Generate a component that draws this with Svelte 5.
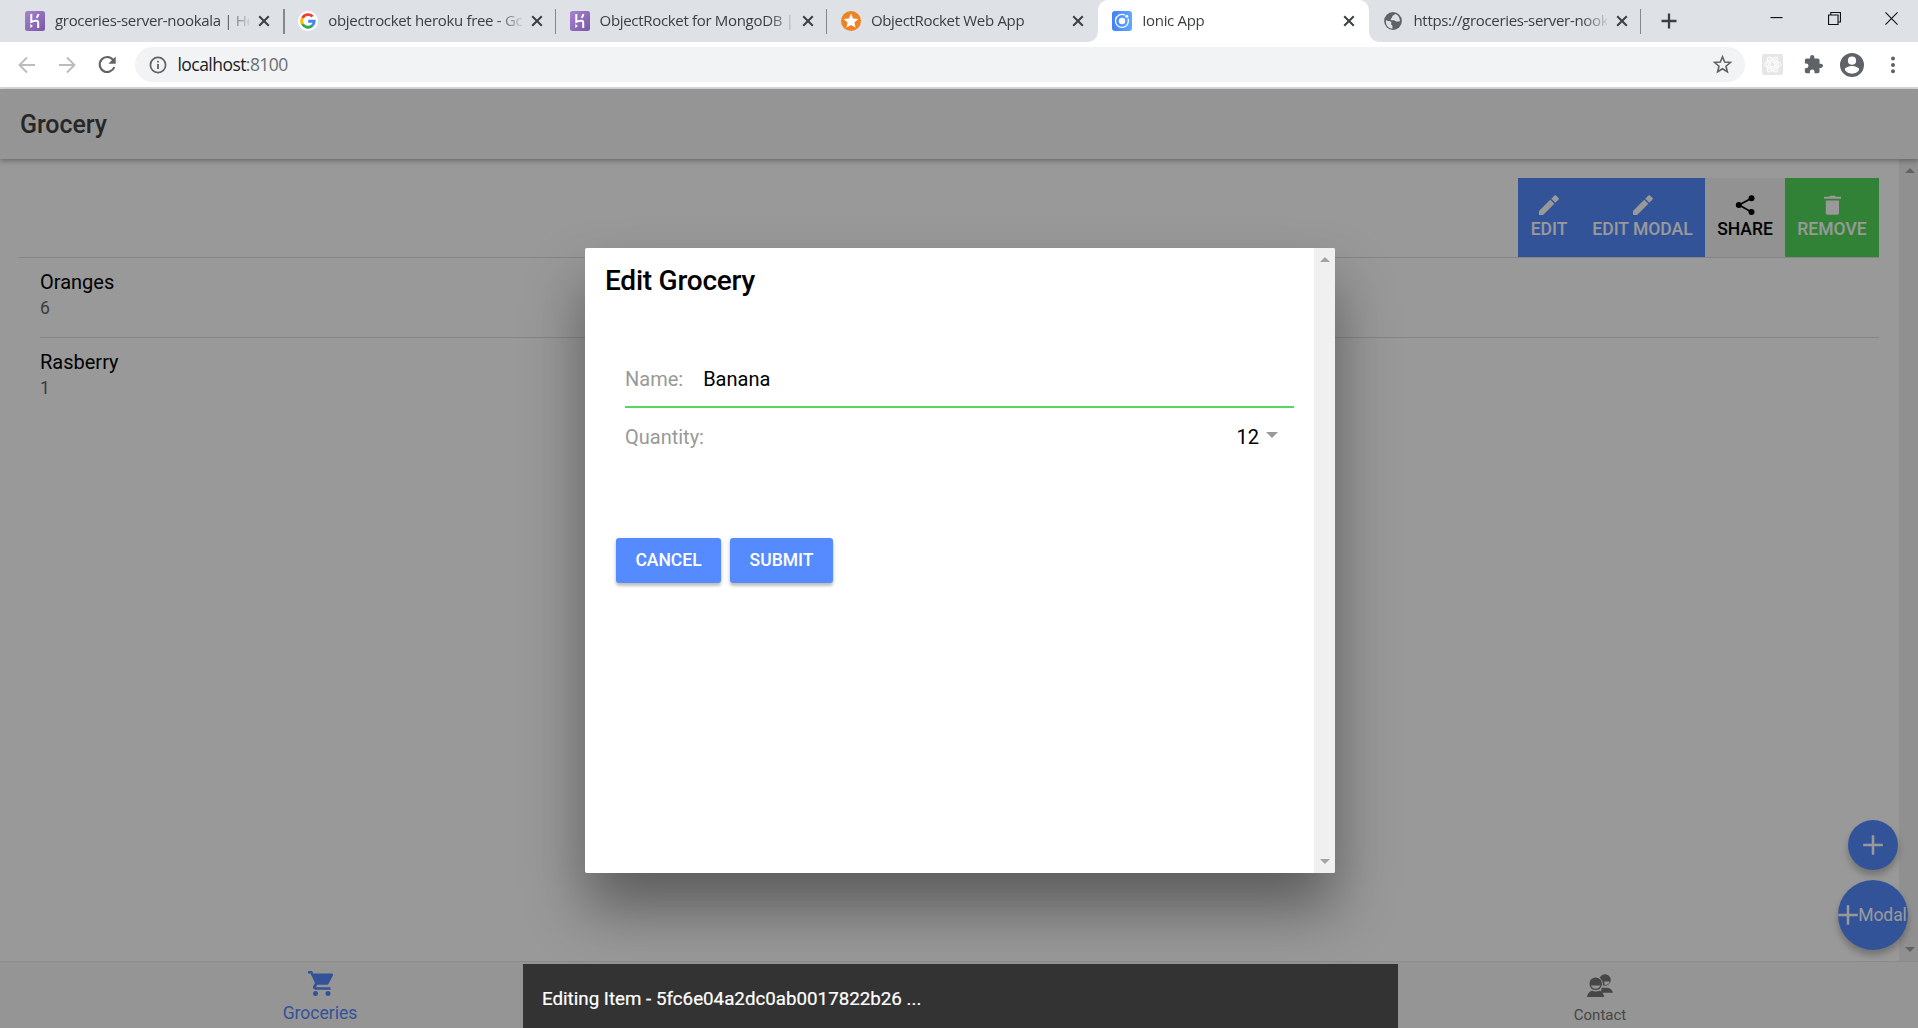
<script>
  const tabs = [
    { title: 'groceries-server-nookala | He', icon: 'heroku' },
    { title: 'objectrocket heroku free - Go', icon: 'google' },
    { title: 'ObjectRocket for MongoDB |', icon: 'heroku' },
    { title: 'ObjectRocket Web App', icon: 'star' },
    { title: 'Ionic App', icon: 'ionic', active: true },
    { title: 'https://groceries-server-nook', icon: 'globe' }
  ];
  const items = [
    { name: 'Oranges', qty: 6 },
    { name: 'Rasberry', qty: 1 }
  ];
</script>

{#snippet favicon(kind)}
  <svg class="favicon" viewBox="0 0 20 20">
    {#if kind === 'heroku'}
      <defs><linearGradient id="hk" x1="0" y1="0" x2="1" y2="1"><stop offset="0" stop-color="#a583cf" /><stop offset="1" stop-color="#7b58a6" /></linearGradient></defs>
      <rect width="20" height="20" rx="2.5" fill="url(#hk)" />
      <path d="M6.3 3v7.9c2.2-1 6.9-2.5 6.9.6V17M13.4 3c-.1 1.500-.8 2.700-1.800 3.800" fill="none" stroke="#fff" stroke-width="2" />
      <path d="M5.300 13l2.600 2-2.600 2z" fill="#fff" />
    {:else if kind === 'google'}
      <circle cx="10" cy="10" r="10" fill="#fff" />
      <g fill="none" stroke-width="2.900">
        <path d="M14.600 5.500A6.300 6.300 0 0 0 4.500 7" stroke="#ea4335" />
        <path d="M4.500 7a6.300 6.300 0 0 0 0 6.200" stroke="#fbbc05" />
        <path d="M4.500 13.100a6.300 6.300 0 0 0 9.700 1.600" stroke="#34a853" />
        <path d="M14.200 14.800a6.300 6.300 0 0 0 2-4.600H10.200" stroke="#4285f4" />
      </g>
    {:else if kind === 'star'}
      <circle cx="10" cy="10" r="10" fill="#f08223" />
      <path d="M10 2.600l2.100 4.900 5.300.4-4 3.500 1.200 5.200L10 13.900l-4.600 2.700 1.200-5.200-4-3.500 5.300-.4z" fill="#fff" />
    {:else if kind === 'ionic'}
      <defs><linearGradient id="io"><stop offset="0" stop-color="#4680fd" /><stop offset="1" stop-color="#60a8fb" /></linearGradient></defs>
      <rect width="20" height="20" rx="3" fill="url(#io)" />
      <path d="M12.800 4.100a6.500 6.500 0 1 0 3.200 3.400" fill="none" stroke="#fff" stroke-width="1.300" />
      <circle cx="10" cy="10" r="3.200" fill="#fff" /><circle cx="14.700" cy="5.200" r="1.500" fill="#fff" />
    {:else}
      <circle cx="10" cy="10" r="8.900" fill="#5f6368" />
      <path d="M3 9c1.500 1.500 3 .5 4.500 1.500 2 1.500-.5 2.500 1.200 3.500 1.300.8.300 2.500 1 3.600C5.500 17.600 2.200 14 3 9zM12 3c-1 1.800-3 1-2.800 3 .1 1.500-1.700 1-1.500 2.500.3 1.500 3 .2 4.300 1.200 1.500 1.200 2.800.8 4.900.6C17 6.500 15 3.700 12 3z" fill="#dee1e6" />
    {/if}
  </svg>
{/snippet}

{#snippet pencil()}
  <svg class="act-icon" viewBox="0 0 20 20" fill="#fff"><path d="M0 15.900V20h4.100L15.300 8.800l-4.100-4.100zM19.600 4.500a1.100 1.100 0 0 0 0-1.500L17 .4a1.100 1.100 0 0 0-1.500 0l-3.300 3.300 4.100 4.100z" /></svg>
{/snippet}

{#snippet plus()}
  <svg class="plus" viewBox="0 0 20 20"><path d="M10 .2v19.600M.2 10h19.600" stroke="#fff" stroke-width="2.500" fill="none" /></svg>
{/snippet}

<div class="window">
  <div class="tabstrip">
    {#each tabs as tab}
      <div class="tab" class:active={tab.active}>
        {@render favicon(tab.icon)}
        <span class="tab-title">{tab.title}</span>
        <svg class="close" viewBox="0 0 12 12"><path d="M1.200 1.200l9.600 9.600M10.800 1.200L1.200 10.800" stroke="#3c4043" stroke-width="2" /></svg>
      </div>
    {/each}
    <svg class="newtab" viewBox="0 0 16 16"><path d="M8 .5v15M.5 8h15" stroke="#3c4043" stroke-width="2.300" /></svg>
    <div class="controls">
      <svg viewBox="0 0 14 14"><path d="M.5 6h13" /></svg>
      <svg viewBox="0 0 14 14"><path d="M.6 3.300h10.200v10.200H.6zM3 3.300V.6h10.400v10.200h-2.500" /></svg>
      <svg viewBox="0 0 14 14"><path d="M.5.500l13 13M13.500.500l-13 13" /></svg>
    </div>
  </div>

  <div class="toolbar">
    <svg class="nav" viewBox="0 0 20 20"><path d="M18 10H3M10 2.500L2.500 10l7.500 7.500" stroke="#babcbe" stroke-width="1.900" fill="none" /></svg>
    <svg class="nav" viewBox="0 0 20 20"><path d="M2 10h15M10 2.500l7.500 7.500-7.500 7.500" stroke="#babcbe" stroke-width="1.900" fill="none" /></svg>
    <svg class="nav" viewBox="0 0 20 20"><path d="M16.200 5A7.500 7.500 0 1 0 17.300 12" stroke="#5f6368" stroke-width="2.100" fill="none" /><path d="M18.700 1.500v7.300h-7.300z" fill="#5f6368" /></svg>
    <div class="omnibox">
      <svg class="info" viewBox="0 0 18 18"><circle cx="9" cy="9" r="7.600" fill="none" stroke="#5f6368" stroke-width="1.700" /><path d="M9 8v5M9 4.800v1.800" stroke="#5f6368" stroke-width="1.800" /></svg>
      <span class="url">localhost<span>:8100</span></span>
      <svg class="star" viewBox="0 0 20 20"><path d="M10 1.900l2.300 5.500 6 .5-4.600 3.900 1.400 5.800L10 14.500l-5.100 3.100 1.400-5.800L1.700 7.900l6-.5z" fill="none" stroke="#5f6368" stroke-width="1.700" /></svg>
    </div>
    <svg class="react" viewBox="0 0 21 21"><rect width="21" height="21" rx="2" fill="#e6e6e6" /><g fill="none" stroke="#fff" stroke-width="1"><ellipse cx="10.500" cy="10.500" rx="8.500" ry="3.500" /><ellipse cx="10.500" cy="10.500" rx="8.500" ry="3.500" transform="rotate(60 10.500 10.500)" /><ellipse cx="10.500" cy="10.500" rx="8.500" ry="3.500" transform="rotate(120 10.500 10.500)" /><circle cx="10.500" cy="10.500" r="2.400" /><circle cx="10.500" cy="10.500" r="6" /></g></svg>
    <svg class="puzzle" viewBox="1 1 22 22"><path fill="#5f6368" d="M20.500 11H19V7c0-1.100-.9-2-2-2h-4V3.500a2.500 2.500 0 0 0-5 0V5H4c-1.100 0-1.990.9-1.990 2v3.800H3.500a2.700 2.700 0 0 1 0 5.400H2V20c0 1.100.9 2 2 2h3.800v-1.500a2.700 2.700 0 0 1 5.400 0V22H17c1.100 0 2-.9 2-2v-4h1.500a2.500 2.500 0 0 0 0-5z" /></svg>
    <svg class="profile" viewBox="2 2 20 20"><path fill="#5f6368" d="M12 2a10 10 0 1 0 0 20 10 10 0 0 0 0-20zm0 3a3.400 3.400 0 1 1 0 6.800A3.400 3.400 0 0 1 12 5zm0 14.200a7.200 7.200 0 0 1-6-3.220c.03-1.990 4-3.080 6-3.080s5.970 1.090 6 3.080A7.200 7.200 0 0 1 12 19.200z" /></svg>
    <svg class="more" viewBox="0 0 6 18" fill="#5f6368"><circle cx="3" cy="2.500" r="2" /><circle cx="3" cy="9" r="2" /><circle cx="3" cy="15.200" r="2" /></svg>
  </div>

  <div class="page">
    <header><h1>Grocery</h1></header>
    <main>
      <div class="list">
        <div class="swiped">
          <div class="action blue edit">{@render pencil()}Edit</div>
          <div class="action blue edit-modal">{@render pencil()}Edit Modal</div>
          <div class="action light"><svg class="act-icon" viewBox="0 0 20 20"><path d="M16.500 3.200L4 10l12.500 7" fill="none" stroke="#000" stroke-width="1.700" /><circle cx="16.500" cy="3.200" r="3" /><circle cx="3.800" cy="10" r="3" /><circle cx="16.500" cy="17" r="3" /></svg>Share</div>
          <div class="action green"><svg class="act-icon" viewBox="0 0 20 20" fill="#fff"><path d="M3.800 5.500H17V17.800a2 2 0 0 1-2 2H5.800a2 2 0 0 1-2-2zM2 1.800H7l1.200-1h4.600l1.200 1h5v2H2z" /></svg>Remove</div>
        </div>
        {#each items as item}
          <div class="item">
            <div class="item-inner">
              <h2>{item.name}</h2>
              <p>{item.qty}</p>
            </div>
          </div>
        {/each}
      </div>
      <div class="scroll"><i class="up"></i><i class="down"></i></div>
      <div class="fabs">
        <div class="fab small">{@render plus()}</div>
        <div class="fab large">{@render plus()}<span>Modal</span></div>
      </div>
    </main>
    <nav class="tabbar">
      <div class="tab-btn selected">
        <svg class="cart" viewBox="0 0 25 25" fill="#568bff"><path d="M0 0v2.500h2.500L7 12l-1.700 3c-.9 1.700.3 3.700 2.200 3.700h15v-2.500H8l1.300-2.500h9.300c1 0 1.800-.5 2.200-1.300L25 4.300c.4-.8-.2-1.800-1.100-1.800H5.300L4.100 0z" /><circle cx="7.500" cy="22.500" r="2.500" /><circle cx="20" cy="22.500" r="2.500" /></svg>
        <span>Groceries</span>
      </div>
      <div class="tab-btn"></div>
      <div class="tab-btn">
        <svg class="contacts" viewBox="0 0 26 23" fill="#757575"><circle cx="18" cy="6" r="5.800" /><path d="M14 18.800h12c-.8-3-3-4.500-5.500-5h-6z" /><circle cx="8.700" cy="9.800" r="7.200" fill="#f8f8f8" /><circle cx="8.700" cy="9.800" r="6.300" /><path d="M4 11.500h9.400c-.6 2-2.300 3.200-4.700 3.200S4.600 13.500 4 11.500zM17 7.500h5.700c-.5 2.500-2.300 3.500-5 3.600z" fill="#f8f8f8" /><path d="M0 23c.4-3.400 2.300-5.400 4.900-6.200 2.300 1 5.300 1 7.700 0 2.500.8 4.200 2.800 4.600 6.200z" /></svg>
        <span>Contact</span>
      </div>
    </nav>

    <div class="backdrop">
      <div class="modal">
        <div class="modal-body">
          <h3>Edit Grocery</h3>
          <div class="form">
            <div class="field name"><label for="name">Name:</label><span id="name">Banana</span></div>
            <div class="field"><label for="qty">Quantity:</label><span id="qty" class="select">12<i></i></span></div>
          </div>
          <div class="buttons">
            <button class="cancel">Cancel</button>
            <button class="submit">Submit</button>
          </div>
        </div>
        <div class="modal-scroll"><i class="up"></i><i class="down"></i></div>
      </div>
    </div>
    <div class="toast">Editing Item - 5fc6e04a2dc0ab0017822b26 ...</div>
  </div>
</div>

<style>
  :global(body) { margin: 0; overflow: hidden; }
  .window { width: 1918px; height: 1028px; display: flex; flex-direction: column; overflow: hidden; font-family: Roboto, sans-serif; box-sizing: border-box; }
  .window *, .window *::before, .window *::after { box-sizing: border-box; }
  svg { display: block; flex: none; overflow: visible; }
  h1, h2, h3, p { margin: 0; font-weight: 400; }

  .tabstrip { height: 42px; flex: none; background: #dee1e6; display: flex; align-items: stretch; padding-left: 10.500px; font-family: "Open Sans", "Noto Sans", sans-serif; }
  .tab { width: 271.300px; display: flex; align-items: center; padding: 0 14px 0 14.500px; position: relative; flex: none; }
  .tab:first-child { width: 273.300px; }
  .tab::after { content: ''; position: absolute; right: -1px; top: 9px; width: 1.500px; height: 25px; background: #84878c; }
  .tab.active { background: #fff; border-radius: 10px 10px 0 0; }
  .tab:has(+ .active)::after { display: none; }
  .tab.active::before, .tab.active::after { content: ''; position: absolute; top: auto; bottom: 0; width: 10px; height: 10px; }
  .tab.active::before { left: -10px; background: radial-gradient(circle at 0 0, transparent 9.500px, #fff 10px); }
  .tab.active::after { right: -10px; background: radial-gradient(circle at 100% 0, transparent 9.500px, #fff 10px); }
  .favicon { width: 20px; height: 20px; margin-right: 10px; }
  .tab-title { width: 194px; height: 24px; line-height: 24px; white-space: nowrap; font-size: 15px; letter-spacing: -0.320px; color: #3c4043; mask-image: linear-gradient(90deg, #000 168px, transparent 198px); margin-top: -2px; }
  .close { width: 12px; height: 12px; margin-left: 8.500px; }
  .newtab { width: 16px; height: 16px; margin: 13px 0 0 21px; }
  .controls { margin-left: auto; display: flex; gap: 44.500px; padding: 12px 20px 0 0; }
  .controls svg { width: 13px; height: 13px; fill: none; stroke: #111; stroke-width: 1.200; }

  .toolbar { height: 47px; flex: none; background: #fff; border-bottom: 2px solid #d9dade; display: flex; align-items: center; padding: 0 22.500px 0 17px; }
  .nav { width: 20px; height: 20px; margin-right: 20px; }
  .omnibox { width: 1610px; height: 35px; margin-left: -2px; border-radius: 18px; background: #f1f3f4; display: flex; align-items: center; padding: 0 13px; }
  .info { width: 18px; height: 18px; margin: 0 11px 0 .5px; }
  .url { flex: 1; font: 17.500px/24px "Open Sans", "Noto Sans", sans-serif; letter-spacing: -0.550px; color: #202124; margin-top: -1px; }
  .url span { color: #6b6f73; }
  .star { width: 19px; height: 19px; }
  .react { width: 21px; height: 21px; margin-left: 17px; }
  .puzzle { width: 19px; height: 19px; margin-left: 20.500px; }
  .profile { width: 24px; height: 24px; margin-left: 17.500px; }
  .more { width: 6px; height: 18px; margin-left: auto; }

  .page { height: 939px; position: relative; display: flex; flex-direction: column; background: #fff; }
  header { height: 70px; flex: none; background: #f8f8f8; display: flex; align-items: center; padding: 1px 20px 0; position: relative; box-shadow: 0 2px 5px rgba(0,0,0,.3); z-index: 1; }
  h1 { font-size: 25px; font-weight: 500; color: #424242; letter-spacing: -.1px; }
  main { height: 802px; flex: none; display: flex; justify-content: space-between; position: relative; }
  .list { width: 1860px; margin: 19px 0 0 19px; }
  .swiped { height: 80px; border-bottom: 1px solid #dedede; display: flex; justify-content: flex-end; }
  .action { height: 79px; display: flex; flex-direction: column; align-items: center; padding-top: 17px; font-size: 17.500px; line-height: 24px; font-weight: 500; text-transform: uppercase; color: #fff; }
  .act-icon { width: 20px; height: 20px; margin-bottom: 2px; }
  .blue { background: #568bff; }
  .edit { width: 62px; }
  .edit-modal { width: 125px; }
  .light { width: 80px; background: #f4f4f4; color: #000; }
  .green { width: 94px; background: #53d95c; }
  .item { padding-left: 21px; }
  .item-inner { height: 80px; border-bottom: 1px solid #dedede; padding-top: 11px; }
  .item:last-child .item-inner { border: 0; }
  h2 { font-size: 20px; line-height: 26px; color: #000; }
  p { font-size: 17.500px; line-height: 26px; color: #666; }
  .scroll { width: 19px; background: #f0f0f0; display: flex; flex-direction: column; justify-content: space-between; padding: 9px 4px 9px 6px; }
  i { display: block; width: 0; height: 0; border: 5px solid transparent; }
  .up { border-top: 0; border-bottom-color: #a3a3a3; }
  .down { border-bottom: 0; border-top-color: #a3a3a3; }
  .fabs { position: absolute; right: 10px; bottom: 11px; display: flex; flex-direction: column; align-items: center; gap: 10px; }
  .fab { border-radius: 50%; background: #568bff; display: flex; align-items: center; justify-content: center; color: #fff; font-size: 17.500px; letter-spacing: -.1px; box-shadow: 0 5px 7px rgba(0,0,0,.26); }
  .small { width: 50px; height: 50px; }
  .large { width: 70px; height: 70px; padding-right: 1px; }
  .plus { width: 20px; height: 20px; }

  .tabbar { height: 70px; flex: none; background: #f8f8f8; border-top: 1px solid #e8e8e8; display: flex; width: 1920px; }
  .tab-btn { flex: 1; display: flex; flex-direction: column; align-items: center; color: #757575; font-size: 15px; }
  .selected { color: #568bff; font-size: 17.500px; }
  .cart { width: 25px; height: 25px; margin: 9px 0 7px; }
  .contacts { width: 26px; height: 23px; margin: 12px 0 8px; }
  .cart + span, .contacts + span { line-height: 20px; }

  .backdrop { position: absolute; inset: 0; background: rgba(0,0,0,.4); z-index: 2; display: flex; align-items: flex-start; justify-content: center; padding: 159px 0 0 2px; }
  .modal { width: 750px; height: 625px; background: #fff; border-radius: 2px; overflow: hidden; display: flex; box-shadow: 0 35px 60px rgba(0,0,0,.4); }
  .modal-body { flex: 1; padding: 0 20px; }
  h3 { font-size: 28px; font-weight: 500; line-height: 32px; margin-top: 17px; letter-spacing: -.230px; }
  .form { padding: 58.500px 0 0 20px; }
  .field { display: flex; align-items: center; height: 58px; font-size: 20px; color: #000; }
  .field label { color: #999; }
  .name { height: 52px; border-bottom: 2px solid #56d75e; gap: 20px; padding-bottom: 4px; }
  .select { margin-left: auto; display: flex; align-items: center; gap: 7px; padding-right: 16px; }
  .select i { border: 6px solid transparent; border-bottom: 0; border-top-color: #999; margin-top: -3px; }
  .buttons { display: flex; gap: 9px; padding: 72px 0 0 11px; }
  button { height: 45px; border: 0; padding: 0; border-radius: 3px; background: #568bff; color: #fff; font: 500 17.500px Roboto, sans-serif; text-transform: uppercase; box-shadow: 0 3px 3px rgba(0,0,0,.2), 0 1px 5px rgba(0,0,0,.12); }
  .cancel { width: 105px; }
  .submit { width: 103px; }
  .modal-scroll { width: 21px; background: #f0f0f0; display: flex; flex-direction: column; align-items: center; justify-content: space-between; padding: 9px 0; }
  .toast { position: absolute; z-index: 3; left: 523px; top: 875px; width: 875px; height: 70px; background: #333; color: #fff; font-size: 18.750px; line-height: 70px; padding-left: 19px; -webkit-text-stroke: .2px #fff; }
</style>
